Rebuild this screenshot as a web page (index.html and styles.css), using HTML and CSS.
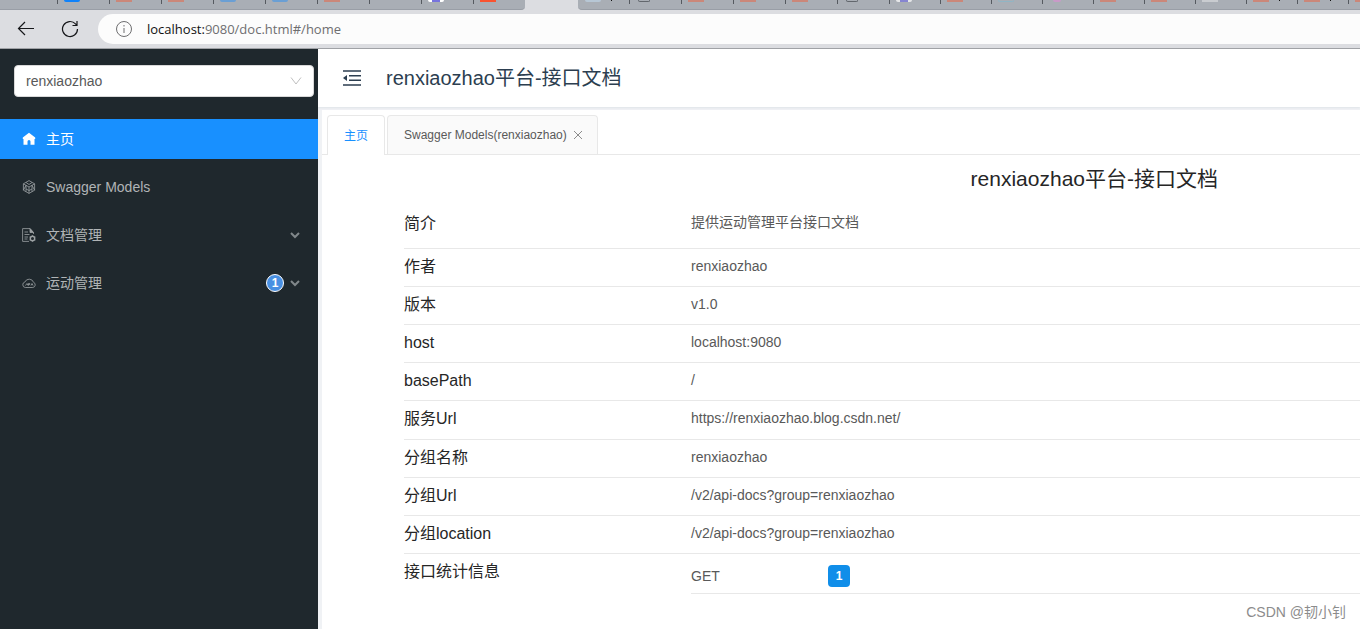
FILE: index.html
```html
<!DOCTYPE html>
<html lang="zh-CN">
<head>
<meta charset="utf-8">
<title>renxiaozhao平台-接口文档</title>
<link rel="stylesheet" href="styles.css">
</head>
<body>
<div class="browser">
  <div class="strip" aria-hidden="true">
    <div class="group group-left">
      <i class="tab lead"></i><i class="tab"><b class="fav blue"></b></i><i class="tab"><b class="fav salmon"></b></i><i class="tab"><b class="fav salmon"></b></i><i class="tab"><b class="fav sky"></b></i><i class="tab"><b class="fav sky"></b></i><i class="tab"><b class="fav salmon"></b></i><i class="tab"></i><i class="tab"><b class="fav violet"></b></i><i class="tab"><b class="fav orange"></b></i>
    </div>
    <div class="active-tab"></div>
    <div class="group group-right">
      <i class="tab slim first"><b class="fav photo"></b><b class="mark"></b></i><i class="tab"><b class="fav page"></b></i><i class="tab"><b class="fav salmon"></b></i><i class="tab"><b class="fav salmon"></b></i><i class="tab"><b class="fav salmon"></b></i><i class="tab"><b class="fav page"></b></i><i class="tab slim"><b class="fav violet dim"></b></i><i class="tab slim"><b class="fav salmon"></b></i><i class="tab slim"><b class="fav frame"></b></i><i class="tab slim"><b class="fav pink"></b></i><i class="tab slim"><b class="fav salmon"></b></i><i class="tab slim"><b class="fav salmon"></b></i><i class="tab slim"><b class="fav pale"></b></i><i class="tab slim"><b class="fav salmon"></b><b class="mark"></b></i><i class="tab slim"><b class="fav salmon"></b><b class="mark"></b></i><i class="tab slim"><b class="fav salmon"></b></i>
    </div>
  </div>
  <div class="toolbar">
    <button class="nav-btn" aria-label="Back"><svg width="18" height="16" viewBox="0 0 18 16"><path d="M17 7.500H1.500M8 1L1.500 7.500l6.500 6.500"/></svg></button>
    <button class="nav-btn" aria-label="Refresh"><svg width="18" height="18" viewBox="0 0 18 18"><path d="M16.500 9a7.500 7.500 0 1 1-2-5.100L16 5.500M16 1v4.500h-4.500"/></svg></button>
    <div class="address">
      <svg width="18" height="18" viewBox="0 0 18 18"><circle cx="9" cy="9" r="7.500"/><path d="M9 8v5M9 5v1.500"/></svg>
      <span class="url"><span class="host">localhost:</span>9080/doc.html#/home</span>
    </div>
  </div>
</div>

<div class="app">
  <aside class="sidebar">
    <div class="picker">
      <select aria-label="分组"><option>renxiaozhao</option></select>
      <svg class="picker-arrow" width="12" height="10" viewBox="0 0 12 10"><path d="M1 1.500l5 6.500 5-6.500"/></svg>
    </div>
    <nav class="menu">
      <a class="item current" href="#/home">
        <svg width="14" height="14" viewBox="0 0 14 14"><path fill="currentColor" d="M7 .8L.8 5.500V7h.7v5.700h4V9.500a1.500 1.500 0 0 1 3 0v3.200h4V7h.7V5.500z"/></svg>
        <span class="label">主页</span>
      </a>
      <a class="item" href="#/models">
        <svg class="line" width="14" height="14" viewBox="0 0 14 14"><path d="M7 .6l5.600 3.200v6.400L7 13.400 1.400 10.200V3.800zM1.400 3.800L7 7l5.600-3.200M7 7v6.400M1.400 10.200L4 5.300v6.400M12.600 10.200L10 5.300v6.400M4 2.500l3 2 3-2M4 9l3 1.500L10 9"/></svg>
        <span class="label">Swagger Models</span>
      </a>
      <a class="item" href="#/docs">
        <svg class="line" width="14" height="14" viewBox="0 0 14 14"><path d="M11.500 6V4.500L8 .6H.6v12.800H7M2.500 4h3.500M2.500 6.500h5M2.500 9h3.500M2.500 11h3"/><path fill="currentColor" d="M8 .6v3.900h3.500z"/><circle cx="10.500" cy="10.500" r="2.200" stroke-width="1.400"/><path d="M10.500 7.200v1M10.500 12.800v1M7.500 9l1 .5M12.500 11.500l1 .5M7.500 12l1-.5M12.500 9.500l1-.5"/></svg>
        <span class="label">文档管理</span>
        <svg class="chev" width="10" height="8" viewBox="0 0 10 8"><path d="M1 2l4 4 4-4"/></svg>
      </a>
      <a class="item" href="#/sport">
        <svg class="line" width="14" height="14" viewBox="0 0 14 14"><path d="M3.300 11.500h7.500A2.700 2.700 0 0 0 11.500 6.300 4.600 4.600 0 0 0 2.900 6 2.800 2.800 0 0 0 3.300 11.500zM3.500 9.500l1.500-2 1 2M6.500 9.500v-2h1.300v1H6.500M9 9.500l1-2 1 2"/></svg>
        <span class="label">运动管理</span>
        <span class="count">1</span>
        <svg class="chev" width="10" height="8" viewBox="0 0 10 8"><path d="M1 2l4 4 4-4"/></svg>
      </a>
    </nav>
  </aside>

  <main class="main">
    <header class="header">
      <button class="fold" aria-label="收起菜单"><svg width="18" height="16" viewBox="0 0 18 16"><path d="M0 1h18M6 5.700h12M6 10.300h12M0 15h18"/><path class="solid" d="M0 8l4-3v6z"/></svg></button>
      <span class="site">renxiaozhao平台-接口文档</span>
    </header>
    <div class="body">
      <div class="tabs">
        <button class="doc-tab selected">主页</button>
        <button class="doc-tab">Swagger Models(renxiaozhao)<svg width="10" height="10" viewBox="0 0 10 10"><path d="M1 1l8 8M9 1L1 9"/></svg></button>
      </div>
      <div class="sheet">
        <h1 class="title">renxiaozhao平台-接口文档</h1>
        <dl class="info">
          <div class="row intro"><dt>简介</dt><dd>提供运动管理平台接口文档</dd></div>
          <div class="row"><dt>作者</dt><dd>renxiaozhao</dd></div>
          <div class="row"><dt>版本</dt><dd>v1.0</dd></div>
          <div class="row"><dt>host</dt><dd>localhost:9080</dd></div>
          <div class="row"><dt>basePath</dt><dd>/</dd></div>
          <div class="row tall"><dt>服务Url</dt><dd>https://renxiaozhao.blog.csdn.net/</dd></div>
          <div class="row"><dt>分组名称</dt><dd>renxiaozhao</dd></div>
          <div class="row"><dt>分组Url</dt><dd>/v2/api-docs?group=renxiaozhao</dd></div>
          <div class="row"><dt>分组location</dt><dd>/v2/api-docs?group=renxiaozhao</dd></div>
          <div class="row stats"><dt>接口统计信息</dt><dd><span class="method">GET</span><span class="total">1</span></dd></div>
        </dl>
      </div>
    </div>
    <span class="watermark">CSDN @韧小钊</span>
  </main>
</div>
</body>
</html>
```
FILE: styles.css
```css
* { box-sizing: border-box; }
body {
  margin: 0;
  height: 100vh;
  display: flex;
  flex-direction: column;
  overflow: hidden;
  background: #fff;
  font-family: "Liberation Sans", "Noto Sans CJK SC", sans-serif;
  font-size: 14px;
}
button { padding: 0; border: 0; background: none; color: inherit; font: inherit; }
svg { flex: none; fill: none; stroke: currentColor; }

/* browser chrome */
.browser { flex: none; background: #dcdde1; border-bottom: 1px solid #a0a2a6; }
.strip { display: flex; height: 10px; }
.group { display: flex; overflow: hidden; background: #a9aeb5; border-bottom: 1px solid #999ea6; }
.group-left { flex: none; border-bottom-right-radius: 4px; }
.group-right { flex: 1; min-width: 0; border-bottom-left-radius: 4px; }
.active-tab { flex: none; width: 53px; }
.tab {
  display: flex;
  flex: none;
  width: 52px;
  padding-left: 7px;
  background: linear-gradient(#555a60, #555a60) no-repeat 0 0 / 1px 4px;
}
.tab.slim { width: 51px; }
.tab.lead { width: 57px; background: none; }
.tab.first { background: none; }
.fav { width: 16px; height: 2px; border-radius: 0 0 2px 2px; }
.blue { background: #0f82fa; }
.salmon { background: #cb8779; border-radius: 0; }
.sky { background: #6a9fd4; }
.violet { background: linear-gradient(90deg, #fff 4px, #7774dd 4px, #7774dd 12px, #fff 12px); }
.dim { opacity: .7; }
.orange { background: #fa5330; border-radius: 0; }
.photo { background: #b7c7d5; }
.page { width: 12px; margin-left: 2px; border: 1px solid #62676d; border-top: 0; }
.frame { border: 1px solid #90b5c5; border-top: 0; }
.pink { width: 8px; margin-left: 4px; background: #c99ac8; }
.pale { background: #c9ccd0; border-radius: 0; }
.mark { width: 1px; height: 1px; margin-left: 10px; background: #111; }

.toolbar { display: flex; align-items: center; height: 38px; padding-left: 17px; }
.nav-btn { display: flex; width: 44px; color: #16171a; }
.nav-btn svg { stroke-width: 1.2; }
.address {
  flex: 1;
  display: flex;
  align-items: center;
  gap: 14px;
  height: 30px;
  margin-left: -7px;
  padding-left: 17px;
  border-radius: 15px 0 0 15px;
  background: #fcfcfc;
  color: #6e6e70;
  font-family: "Open Sans", "Noto Sans", sans-serif;
  font-size: 13px;
}
.host { color: #111; }

/* application */
.app { flex: 1; display: flex; min-height: 0; }
.sidebar { flex: none; width: 318px; padding-top: 16px; background: #1f282d; }
.picker { display: grid; align-items: center; margin: 0 4px 22px 14px; }
.picker > * { grid-area: 1 / 1; }
.picker select {
  appearance: none;
  width: 100%;
  height: 32px;
  padding: 0 11px;
  border: 1px solid #d9d9d9;
  border-radius: 4px;
  background: #fff;
  color: #595959;
  font: inherit;
}
.picker-arrow { justify-self: end; margin-right: 12px; color: #bfbfbf; pointer-events: none; }
.menu { display: flex; flex-direction: column; gap: 8px; }
.item {
  display: flex;
  align-items: center;
  height: 40px;
  padding: 0 18px 0 22px;
  color: #b0b4b6;
  line-height: 20px;
  text-decoration: none;
}
.item.current { background: #1890ff; color: #fff; }
.item.current svg { stroke: none; }
.label { flex: 1; margin-left: 10px; }
.line { stroke-width: .8; color: #9da2a4; }
.chev { color: #80878a; stroke-width: 2; }
.count {
  width: 18px;
  margin-right: 6px;
  border: 1px solid #fff;
  border-radius: 9px;
  background: #4990e2;
  color: #fff;
  font-size: 12px;
  font-weight: 700;
  line-height: 16px;
  text-align: center;
}

.main { flex: 1; position: relative; display: flex; flex-direction: column; min-width: 0; overflow: hidden; background: #f0f2f5; }
.header {
  display: flex;
  flex: none;
  align-items: center;
  gap: 25px;
  height: 58px;
  padding-left: 25px;
  background: #fff;
  box-shadow: 0 1px 2px #dfe3e8;
  color: #2c3e50;
}
.fold { display: flex; }
.fold svg { stroke-width: 1.6; }
.fold .solid { fill: currentColor; stroke: none; }
.site { font-size: 20px; line-height: 30px; }
.body { flex: 1; margin: 3px 0 0 4px; padding-top: 5px; background: #fff; }
.tabs { display: flex; gap: 2px; height: 40px; padding-left: 5px; border-bottom: 1px solid #e8e8e8; }
.doc-tab {
  display: flex;
  align-items: center;
  gap: 6px;
  height: 39px;
  padding: 0 14px 0 16px;
  border: 1px solid #e8e8e8;
  border-bottom: 0;
  border-radius: 4px 4px 0 0;
  background: #fafafa;
  color: #595959;
  font-size: 12px;
}
.doc-tab.selected { height: 40px; padding: 0 16px 2px; background: #fff; color: #1890ff; }
.doc-tab svg { color: #8c8c8c; }

.sheet { width: 149%; padding-left: 82px; }
.title {
  margin: 0 84px 12px 0;
  padding-top: 8px;
  color: #262626;
  font-size: 21px;
  font-weight: 400;
  line-height: 32px;
  text-align: center;
}
.info { margin: 0; }
.row { display: grid; grid-template-columns: 287px 1fr; height: 38px; border-bottom: 1px solid #e8e8e8; line-height: 24px; }
.row dt { padding-top: 6px; color: #262626; font-size: 16px; }
.row dd { margin: 0; padding-top: 5px; color: #595959; }
.row.intro { height: 42px; }
.row.tall { height: 39px; }
.row.intro dt { padding-top: 5px; }
.row.intro dd { padding-top: 3px; }
.row.stats { border: 0; height: 40px; }
.row.stats dd { display: flex; align-items: center; border-bottom: 1px solid #e8e8e8; }
.method { width: 137px; }
.total { width: 22px; border-radius: 4px; background: #108ee9; color: #fff; font-size: 12px; font-weight: 700; line-height: 22px; text-align: center; }
.watermark { position: absolute; right: 14px; bottom: 8px; color: #8c8c8c; font-size: 14px; }
```
